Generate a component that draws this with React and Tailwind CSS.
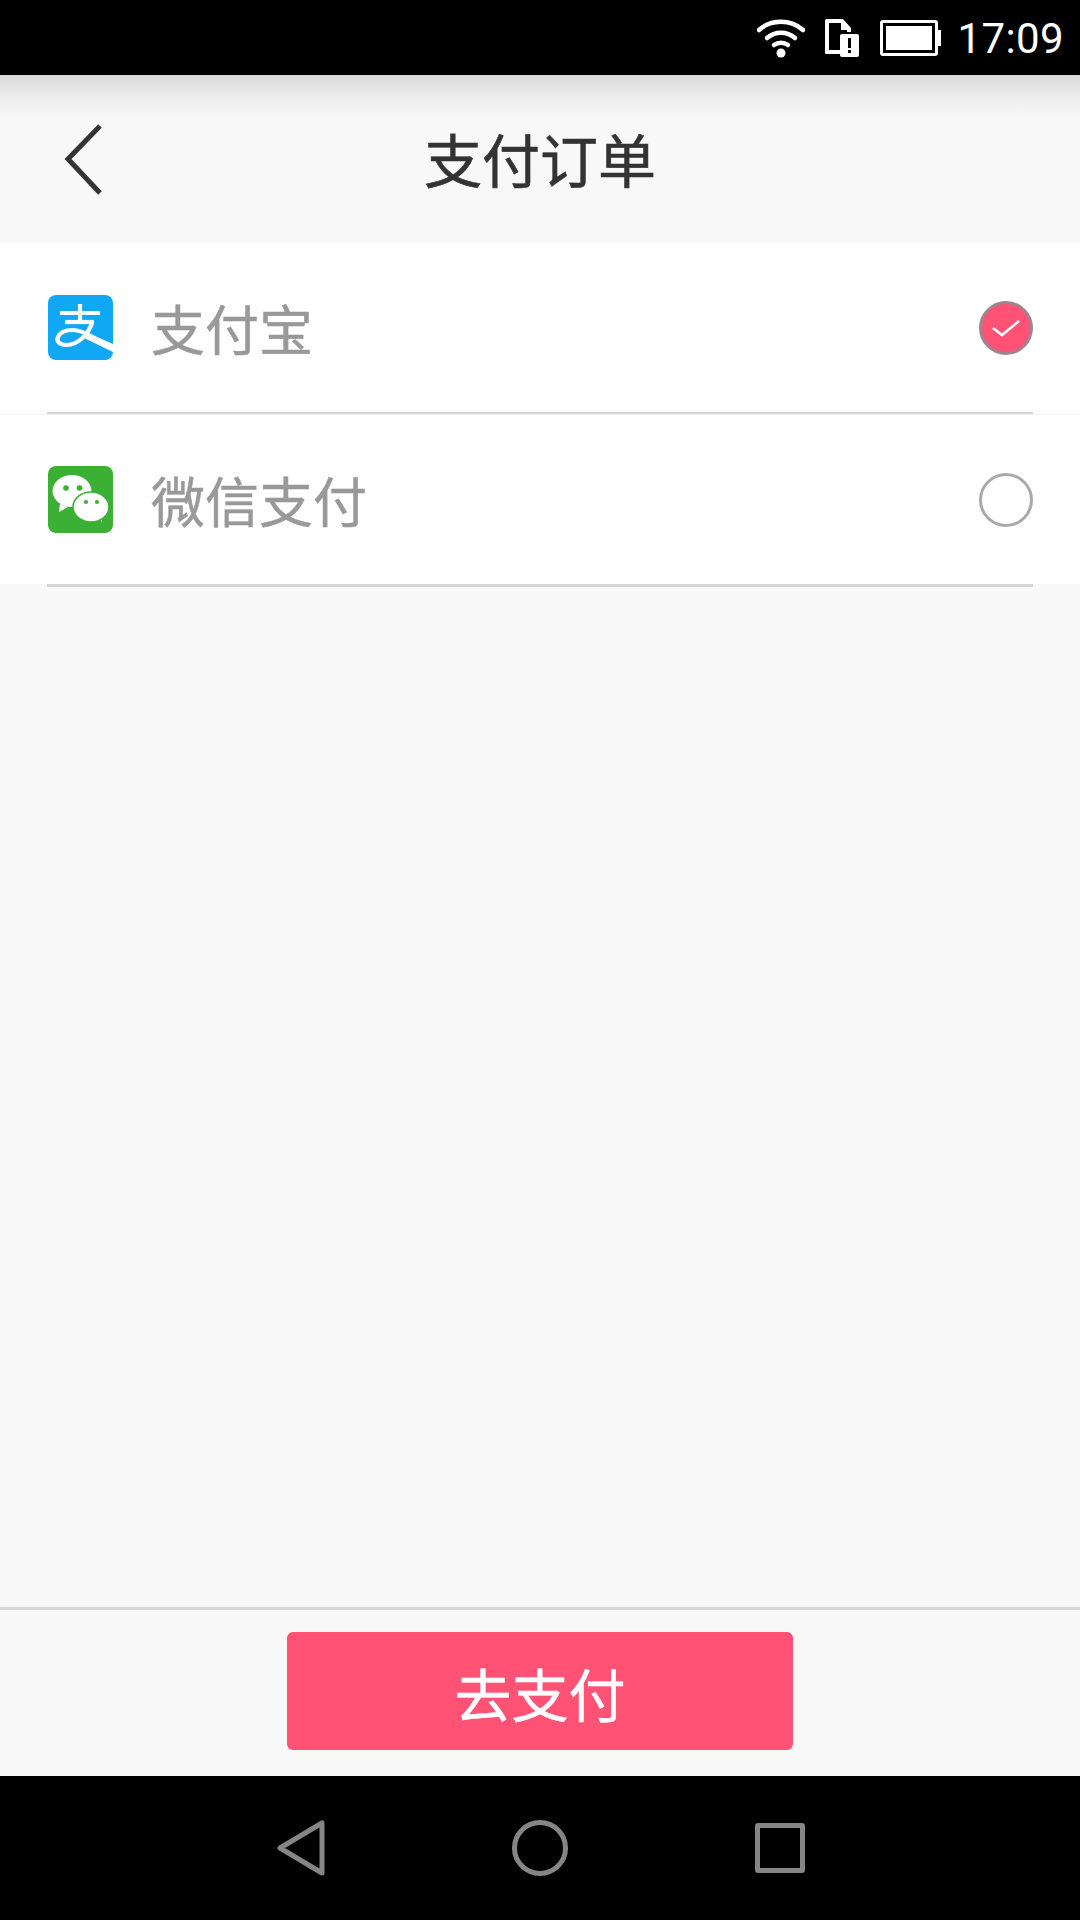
import React from 'react';

const cjk = { fontFamily: '"Noto Sans CJK SC", "Noto Sans", sans-serif' };

function AlipayIcon() {
  return (
    <svg width="65" height="65" viewBox="0 0 65 65" className="shrink-0">
      <rect width="65" height="65" rx="8" fill="#10a7f5" />
      <g fill="none" stroke="#fff" strokeWidth="4.2">
        <path d="M12 18H52" />
        <path d="M17 27H46" />
        <path d="M32 9V27" />
        <path d="M44 28C40 40 29 50 19 50C11 50 8 46 10 42C12 37 18 35 25 35C35 35 44 42 52 46" />
      </g>
      <path d="M40 38L65 49V57L36 43Z" fill="#fff" />
    </svg>
  );
}

function WechatIcon() {
  return (
    <svg width="65" height="67" viewBox="0 0 65 67" className="shrink-0">
      <rect width="65" height="67" rx="8" fill="#3cb034" />
      <path d="M12 38L11 46L20 41Z" fill="#fff" />
      <ellipse cx="24" cy="25" rx="19.5" ry="16" fill="#fff" />
      <circle cx="18" cy="22" r="2.8" fill="#3cb034" />
      <circle cx="31.5" cy="22" r="2.8" fill="#3cb034" />
      <path d="M48 50L54 56L53 47Z" fill="#fff" />
      <ellipse cx="43" cy="41" rx="18" ry="15" fill="#fff" stroke="#3cb034" strokeWidth="1.6" />
      <circle cx="38" cy="36" r="2.1" fill="#3cb034" />
      <circle cx="49" cy="36" r="2.1" fill="#3cb034" />
    </svg>
  );
}

function Radio({ checked }) {
  if (!checked) {
    return <div className="w-[54px] h-[54px] rounded-full border-[3px] border-[#a9a9a9] bg-white shrink-0" />;
  }
  return (
    <div className="w-[54px] h-[54px] rounded-full border-[3px] border-[#a0848c] bg-[#ff5274] shrink-0 flex items-center justify-center">
      <svg width="30" height="20" viewBox="0 0 30 20" fill="none">
        <path d="M2 10L11 17L28 3" stroke="#fff" strokeWidth="2.6" />
      </svg>
    </div>
  );
}

function PayRow({ icon, label, checked, white }) {
  return (
    <div className={white ? 'bg-white border-b border-[#f3f3f3]' : ''}>
      <div className="h-[169px] bg-white flex items-center pl-[48px] pr-[47px]">
        {icon}
        <span className="ml-[38px] flex-1 text-[54px] leading-none text-[#999999] pt-[1px] [-webkit-text-stroke:0.5px_#999999]" style={cjk}>
          {label}
        </span>
        <Radio checked={checked} />
      </div>
      <div className={white ? 'mx-[47px] h-[2px] bg-[#d4d4d4]' : 'mx-[47px] h-[3px] bg-[#d4d4d4]'} />
    </div>
  );
}

export default function App() {
  return (
    <div className="w-[1080px] h-[1920px] flex flex-col bg-[#f8f8f8]">
      {/* Status bar */}
      <div className="h-[75px] bg-black flex items-center justify-end pr-[16px] text-white">
        <svg width="48" height="40" viewBox="0 0 48 40" fill="none" stroke="#fff" strokeWidth="4.5" strokeLinecap="round">
          <path d="M2 12C14 1 34 1 46 12" />
          <path d="M10 20C18 13 30 13 38 20" />
          <path d="M17 27C21 24 27 24 31 27" />
          <circle cx="24" cy="35" r="4.5" fill="#fff" stroke="none" />
        </svg>
        <svg width="34" height="38" viewBox="0 0 34 38" className="ml-[20px]">
          <path d="M0 1.5A1.5 1.5 0 0 1 1.5 0H18L26 9V13H22V11H16V4H4V31H15V35H1.5A1.5 1.5 0 0 1 0 33.5Z" fill="#fff" />
          <rect x="15" y="15" width="19" height="23" rx="2" fill="#fff" />
          <rect x="23" y="19" width="3" height="10" fill="#000" />
          <rect x="23" y="31" width="3" height="3" fill="#000" />
        </svg>
        <div className="ml-[21px] flex items-center">
          <div className="w-[58px] h-[36px] rounded-[3px] border-[3px] border-white p-[3px]">
            <div className="w-full h-full bg-white" />
          </div>
          <div className="w-[3px] h-[16px] bg-white" />
        </div>
        <span className="ml-[16px] text-[42px] leading-none tracking-[0.4px] pt-[3px]" style={{ fontFamily: 'Roboto, sans-serif' }}>
          17:09
        </span>
      </div>

      {/* Header */}
      <div className="h-[168px] relative flex items-center justify-center border-t border-[#d0d8d8] bg-[linear-gradient(to_bottom,#d9d9d9_0px,#eeeeee_22px,#f8f8f8_45px)]">
        <svg width="40" height="74" viewBox="0 0 40 74" fill="none" className="absolute left-[64px] top-[47px]">
          <path d="M36 3L4 36L36 70" stroke="#333" strokeWidth="5" />
        </svg>
        <span className="text-[58px] leading-none text-[#333333] pb-[3px] [-webkit-text-stroke:0.6px_#333333]" style={cjk}>
          支付订单
        </span>
      </div>

      <PayRow icon={<AlipayIcon />} label="支付宝" checked white />
      <PayRow icon={<WechatIcon />} label="微信支付" />

      <div className="flex-1" />

      {/* Bottom action */}
      <div className="h-[169px] border-t-[3px] border-[#d6d6d6] flex justify-center pt-[22px]">
        <button className="w-[506px] h-[118px] rounded-[6px] bg-[#ff5274] text-white text-[57px] leading-none pt-[3px] [-webkit-text-stroke:0.5px_#ffffff]" style={cjk}>
          去支付
        </button>
      </div>

      {/* Nav bar */}
      <div className="h-[144px] bg-black flex items-start justify-center pt-[44px] gap-[187px] pl-[2px]">
        <svg width="48" height="56" viewBox="0 0 48 56" fill="none">
          <path d="M3 28L45 3V53Z" stroke="#858585" strokeWidth="5" strokeLinejoin="round" />
        </svg>
        <div className="w-[56px] h-[56px] rounded-full border-[5px] border-[#858585]" />
        <div className="w-[50px] h-[50px] mt-[3px] rounded-[3px] border-[5px] border-[#858585]" />
      </div>
    </div>
  );
}
